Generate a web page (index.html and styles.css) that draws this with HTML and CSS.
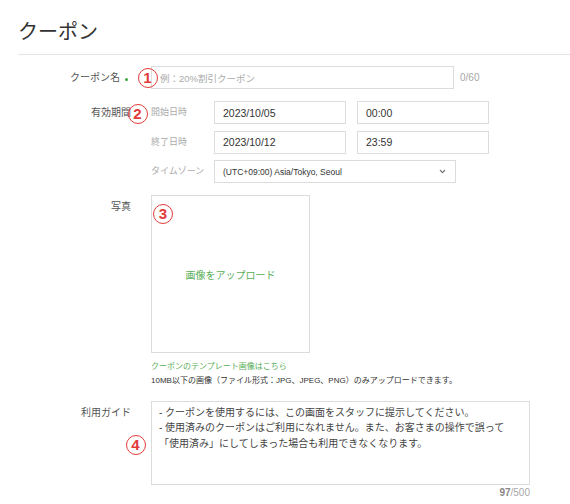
FILE: index.html
```html
<!DOCTYPE html>
<html lang="ja">
<head>
<meta charset="utf-8">
<title>クーポン</title>
<link rel="stylesheet" href="styles.css">
</head>
<body>
<div class="page">
  <header class="head">
    <h1 class="title">クーポン</h1>
  </header>

  <form class="form">
    <div class="row row-name">
      <label class="lbl">クーポン名<span class="req"></span></label>
      <div class="field inline">
        <input class="input input-name" type="text" placeholder="例：20%割引クーポン">
        <span class="count">0/60</span>
      </div>
    </div>

    <div class="row row-period">
      <label class="lbl">有効期間</label>
      <div class="field period">
        <span class="sublbl">開始日時</span>
        <input class="input input-date" type="text" value="2023/10/05">
        <input class="input input-time" type="text" value="00:00">
        <span class="sublbl">終了日時</span>
        <input class="input input-date" type="text" value="2023/10/12">
        <input class="input input-time" type="text" value="23:59">
        <span class="sublbl">タイムゾーン</span>
        <div class="select">
          <span class="select-text">(UTC+09:00) Asia/Tokyo, Seoul</span>
          <svg class="chev" width="7" height="5" viewBox="0 0 7 5"><path d="M1 1 L3.5 3.6 L6 1" fill="none" stroke="#777" stroke-width="1.2"/></svg>
        </div>
      </div>
    </div>

    <div class="row row-photo">
      <label class="lbl">写真</label>
      <div class="field">
        <div class="upload"><span class="upload-text">画像をアップロード</span></div>
        <p class="tpl-link">クーポンのテンプレート画像はこちら</p>
        <p class="note">10MB以下の画像（ファイル形式：JPG、JPEG、PNG）のみアップロードできます。</p>
      </div>
    </div>

    <div class="row row-guide">
      <label class="lbl">利用ガイド</label>
      <div class="field">
        <textarea class="guide">- クーポンを使用するには、この画面をスタッフに提示してください。
- 使用済みのクーポンはご利用になれません。また、お客さまの操作で誤って
「使用済み」にしてしまった場合も利用できなくなります。</textarea>
        <div class="count count-guide"><b>97</b>/500</div>
      </div>
    </div>
  </form>

  <span class="ann ann1">1</span>
  <span class="ann ann2">2</span>
  <span class="ann ann3">3</span>
  <span class="ann ann4">4</span>
</div>
</body>
</html>
```

FILE: styles.css
```css
* { box-sizing: border-box; }

body {
  margin: 0;
  background: #fff;
  color: #333;
  font-family: "Liberation Sans", "Noto Sans CJK JP", sans-serif;
}

.page {
  position: relative;
  width: 570px;
  height: 504px;
  overflow: hidden;
}

.head {
  margin-left: 18px;
  padding-top: 20px;
  padding-bottom: 10px;
  border-bottom: 1px solid #e5e5e5;
}

.title {
  margin: 0;
  font-size: 20px;
  line-height: 24px;
  font-weight: normal;
  color: #333;
}

.form {
  padding-top: 11px;
}

.row {
  display: grid;
  grid-template-columns: 113px 1fr;
  column-gap: 20px;
  margin-left: 18px;
}

.lbl {
  text-align: right;
  font-size: 10px;
  line-height: 23px;
  color: #555;
}

.req {
  display: inline-block;
  width: 3px;
  height: 3px;
  border-radius: 50%;
  background: #3cab3c;
  margin: 0 3px 0 5px;
  vertical-align: 0;
}

.row-period { margin-top: 12px; }
.row-photo { margin-top: 12px; }
.row-guide { margin-top: 13.5px; }

.inline {
  display: flex;
  align-items: center;
}

.input {
  height: 23px;
  border: 1px solid #dcdcdc;
  border-radius: 0;
  padding: 0 8px;
  font-family: "Liberation Sans", "Noto Sans CJK JP", sans-serif;
  font-size: 10.5px;
  color: #333;
  background: #fff;
  outline: none;
  margin: 0;
}

.input::placeholder {
  color: #aaa;
  font-size: 9.5px;
}

.input-name { width: 303px; }

.count {
  font-size: 10px;
  color: #a8a8a8;
  margin-left: 6px;
}

.period {
  display: grid;
  grid-template-columns: 52px 132px 132px;
  column-gap: 11px;
  row-gap: 6.5px;
}

.input-date, .input-time { width: 132px; }

.sublbl {
  font-size: 9px;
  line-height: 23px;
  color: #aaa;
  white-space: nowrap;
}

.select {
  grid-column: 2 / 4;
  width: 242px;
  height: 23px;
  border: 1px solid #dcdcdc;
  display: flex;
  align-items: center;
  justify-content: space-between;
  padding: 0 9px 0 8px;
}

.select-text {
  font-size: 8.5px;
  color: #333;
}

.chev { display: block; }

.upload {
  width: 159px;
  height: 158px;
  border: 1px solid #dcdcdc;
  display: flex;
  align-items: center;
  justify-content: center;
}

.upload-text {
  font-size: 10px;
  color: #5aae5a;
}

.tpl-link {
  margin: 8px 0 0;
  font-size: 8px;
  line-height: 12px;
  color: #5aae5a;
}

.note {
  margin: 2px 0 0;
  font-size: 8px;
  line-height: 12px;
  color: #333;
}

.guide {
  display: block;
  width: 379px;
  height: 84px;
  margin: 0;
  border: 1px solid #dcdcdc;
  padding: 3px 7px;
  font-family: "Liberation Sans", "Noto Sans CJK JP", sans-serif;
  font-size: 10px;
  line-height: 15.5px;
  color: #444;
  resize: none;
  outline: none;
  overflow: hidden;
}

.count-guide {
  width: 379px;
  margin: 2px 0 0;
  text-align: right;
  line-height: 12px;
}

.count-guide b { color: #888; }

.ann {
  position: absolute;
  width: 20px;
  height: 20px;
  border: 1.4px solid #e23a3a;
  border-radius: 50%;
  color: #e23a3a;
  font-family: "Liberation Sans", sans-serif;
  font-weight: bold;
  font-size: 15px;
  line-height: 17.5px;
  text-align: center;
}

.ann1 { left: 137.5px; top: 67.5px; }
.ann2 { left: 127.5px; top: 103.5px; }
.ann3 { left: 153px; top: 203.5px; }
.ann4 { left: 125.5px; top: 435px; }
```
